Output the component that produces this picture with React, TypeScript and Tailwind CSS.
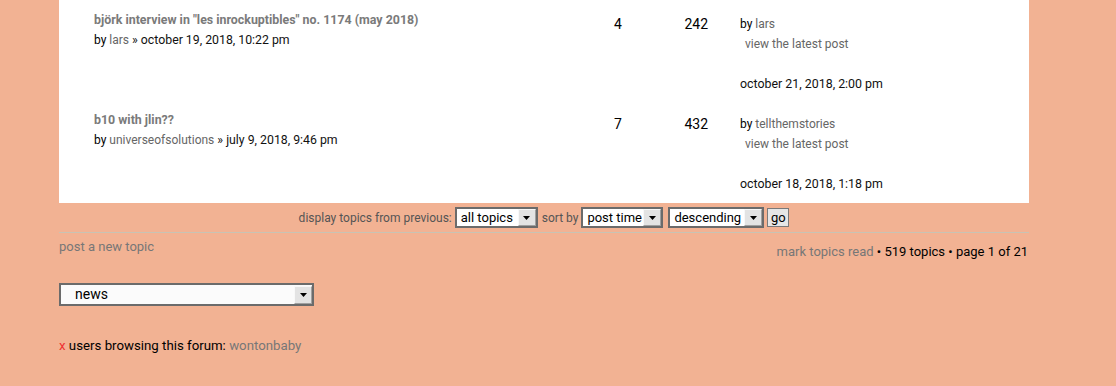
import React from "react";

function Arrow({ h = "h-[17px]" }: { h?: string }) {
  return (
    <div className={`w-[18px] ${h} bg-[#e3e3e3] border border-[#f8f8f8] border-r-[#a0a0a0] border-b-[#a0a0a0] flex items-center justify-center`}>
      <svg width="7" height="4" viewBox="0 0 7 4"><polygon points="0,0 7,0 3.5,4" fill="#000" /></svg>
    </div>
  );
}

function Sel({ label, w }: { label: string; w: string }) {
  return (
    <div className={`${w} h-[21px] border-2 border-[#6b6b6b] bg-white flex items-center justify-between`}>
      <span className="pl-[4px] text-[13px] text-black leading-none">{label}</span>
      <Arrow />
    </div>
  );
}

function Row({ title, author, date, replies, views, lastBy, lastDate }: { title: string; author: string; date: string; replies: string; views: string; lastBy: string; lastDate: string }) {
  return (
    <div className="flex h-[100px]">
      <div className="w-[455px] pl-[35px] pt-[9px]">
        <div className="text-[12.4px] font-bold text-[#7a7a7a] leading-[21px] whitespace-nowrap">{title}</div>
        <div className="text-[12px] text-black leading-[21px] whitespace-nowrap">
          by <span className="text-[#666]">{author}</span> <span className="text-[12.3px] text-[#111]">» {date}</span>
        </div>
      </div>
      <div className="w-[110px] pt-[13px] text-[14px] text-black leading-[22px]">
        <span className="pl-[100px]">{replies}</span>
      </div>
      <div className="w-[85px] pt-[13px] text-[14px] text-black leading-[22px] text-right pr-[1px]">
        <span className="pl-[40px]">{views}</span>
      </div>
      <div className="pl-[31px] pt-[14px] text-[12px] leading-[20px] text-black whitespace-nowrap">
        <div>by <span className="text-[#666]">{lastBy}</span></div>
        <div className="pl-[5px] text-[#666]">view the latest post</div>
        <div>&nbsp;</div>
        <div className="text-[12.4px] text-[#111]">{lastDate}</div>
      </div>
    </div>
  );
}

export default function App() {
  return (
    <div className="w-[1116px] h-[386px] bg-[#f2b293] overflow-hidden" style={{ fontFamily: "Roboto, 'Liberation Sans', sans-serif" }}>
      <div className="ml-[59px] w-[970px]">
        <div className="bg-white h-[203px] pt-[0px]">
          <Row title={"björk interview in \"les inrockuptibles\" no. 1174 (may 2018)"} author="lars" date="october 19, 2018, 10:22 pm" replies="4" views="242" lastBy="lars" lastDate="october 21, 2018, 2:00 pm" />
          <Row title="b10 with jlin??" author="universeofsolutions" date="july 9, 2018, 9:46 pm" replies="7" views="432" lastBy="tellthemstories" lastDate="october 18, 2018, 1:18 pm" />
        </div>
        <div className="flex items-center justify-center h-[28px] pt-[1px] text-[12px]">
          <span className="text-[#555] mr-[3px]">display topics from previous:</span>
          <Sel label="all topics" w="w-[83px]" />
          <span className="text-[#555] ml-[4px] mr-[3px]">sort by</span>
          <Sel label="post time" w="w-[82px]" />
          <Sel label="descending" w="w-[96px] ml-[5px]" />
          <div className="h-[19px] w-[22px] ml-[3px] border border-[#7a7a7a] bg-[#e6e6e6] text-[13px] text-black leading-[16px] flex items-center justify-center">go</div>
        </div>
        <div className="h-px bg-[#c8c3b4] mt-[1px]" />
        <div className="flex justify-between items-start mt-[6px]">
          <div className="text-[13px] text-[#777] leading-[16px]">post a new topic</div>
          <div className="text-[13px] text-black leading-[16px] mt-[5px] pr-[1px]">
            <span className="text-[#777]">mark topics read</span> • 519 topics • page 1 of 21
          </div>
        </div>
        <div className="mt-[23px] w-[255px] h-[23px] border-2 border-[#6b6b6b] bg-[#fbfbfb] flex items-center justify-between">
          <span className="pl-[14px] text-[14px] text-black">news</span>
          <Arrow h="h-[18px]" />
        </div>
        <div className="mt-[32px] text-[13.25px] leading-[16px] text-black">
          <span className="text-[#ee3333]">x</span> users browsing this forum: <span className="text-[#777]">wontonbaby</span>
        </div>
      </div>
    </div>
  );
}
